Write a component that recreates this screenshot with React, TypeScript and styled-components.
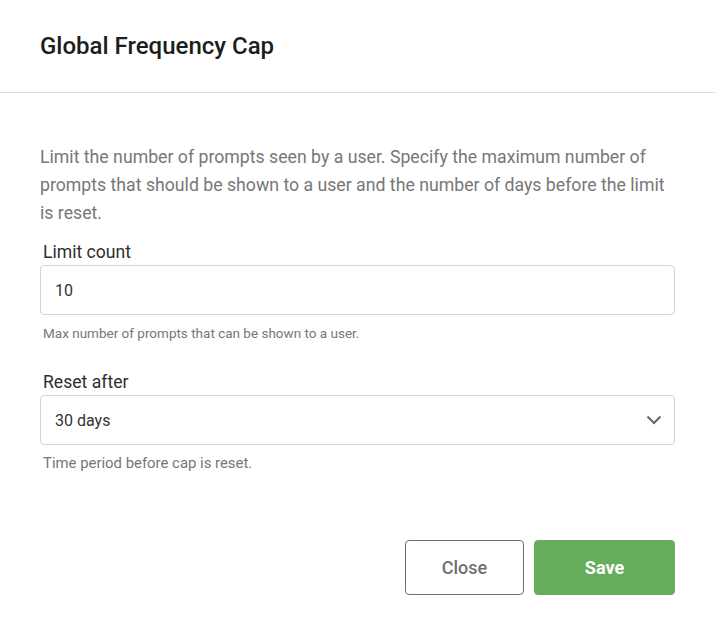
import React from "react";
import styled, { createGlobalStyle } from "styled-components";

const GlobalStyle = createGlobalStyle`
  html, body {
    margin: 0;
    padding: 0;
    background: #fff;
  }
  body {
    font-family: Roboto, "Liberation Sans", sans-serif;
  }
`;

const Dialog = styled.div`
  width: 716px;
  background: #fff;
`;

const Header = styled.div`
  height: 93px;
  padding: 0 40px;
  display: flex;
  align-items: center;
  border-bottom: 1px solid #dedede;
  box-sizing: border-box;
`;

const Title = styled.h2`
  margin: 0;
  font-size: 24px;
  font-weight: 500;
  color: #1d1d1d;
`;

const Body = styled.div`
  padding: 50px 41px 0 40px;
`;

const Description = styled.p`
  margin: 0 0 15px;
  font-size: 17.7px;
  line-height: 28px;
  color: #777;
`;

const Field = styled.div`
  margin-bottom: ${(props: { gap: number }) => props.gap}px;
`;

const Label = styled.label`
  display: block;
  padding-left: 3px;
  font-size: 17.6px;
  font-weight: 400;
  line-height: 20px;
  color: #2e2e2e;
  margin-bottom: 3px;
`;

const Input = styled.input`
  display: block;
  width: 100%;
  height: 50px;
  box-sizing: border-box;
  border: 1px solid #d4d4d4;
  border-radius: 4px;
  padding: 0 14px;
  font-family: Roboto, "Liberation Sans", sans-serif;
  font-size: 16px;
  color: #333;
  outline: none;
`;

const SelectBox = styled.div`
  height: 50px;
  box-sizing: border-box;
  border: 1px solid #d4d4d4;
  border-radius: 4px;
  padding: 0 12px 0 14px;
  display: flex;
  align-items: center;
  justify-content: space-between;
  font-size: 16px;
  color: #333;
`;

const Help = styled.div<{ size: number }>`
  padding-left: 3px;
  margin-top: 10px;
  font-size: ${(p) => p.size}px;
  color: #777;
  line-height: 16px;
`;

const Footer = styled.div`
  display: flex;
  justify-content: flex-end;
  gap: 10px;
  padding: 69px 41px 0 40px;
`;

const Button = styled.button<{ primary?: boolean }>`
  height: 55px;
  width: ${(p) => (p.primary ? 141 : 119)}px;
  border-radius: 4px;
  font-family: Roboto, "Liberation Sans", sans-serif;
  font-size: 18px;
  font-weight: ${(p) => (p.primary ? 700 : 500)};
  cursor: pointer;
  background: ${(p) => (p.primary ? "#66ad5c" : "#fff")};
  color: ${(p) => (p.primary ? "#fff" : "#707070")};
  border: 1px solid ${(p) => (p.primary ? "#66ad5c" : "#707070")};
`;

const Chevron = () => (
  <svg width="16" height="10" viewBox="0 0 16 10" fill="none">
    <path d="M1.5 1.5L8 8L14.5 1.5" stroke="#666" strokeWidth="2" />
  </svg>
);

export default function App() {
  return (
    <>
      <GlobalStyle />
      <Dialog>
        <Header>
          <Title>Global Frequency Cap</Title>
        </Header>
        <Body>
          <Description>
            Limit the number of prompts seen by a user. Specify the maximum
            number of prompts that should be shown to a user and the number of
            days before the limit is reset.
          </Description>
          <Field gap={31}>
            <Label>Limit count</Label>
            <Input defaultValue="10" />
            <Help size={13.5}>Max number of prompts that can be shown to a user.</Help>
          </Field>
          <Field gap={0}>
            <Label>Reset after</Label>
            <SelectBox>
              <span>30 days</span>
              <Chevron />
            </SelectBox>
            <Help size={14.9}>Time period before cap is reset.</Help>
          </Field>
        </Body>
        <Footer>
          <Button>Close</Button>
          <Button primary>Save</Button>
        </Footer>
      </Dialog>
    </>
  );
}
